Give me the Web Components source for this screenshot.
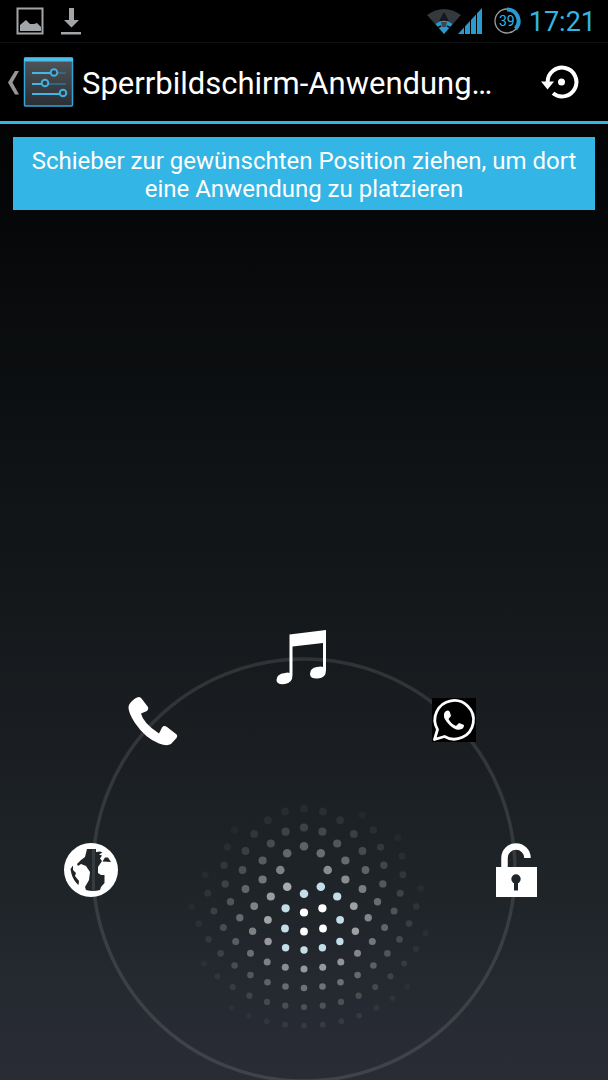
<!DOCTYPE html>
<html lang="de">
<head>
<meta charset="utf-8">
<meta name="viewport" content="width=device-width, initial-scale=1">
<title>Sperrbildschirm-Anwendungen</title>
<style>
  html { height: 100%; }
  body {
    margin: 0;
    min-height: 100%;
    display: flex;
    flex-direction: column;
    background: linear-gradient(#000 0%, #050607 18%, #0e1113 40%, #16191c 58%, #1f2428 82%, #282b34 96%, #292c35 100%);
    color: #fff;
    font-family: Roboto, "Liberation Sans", sans-serif;
  }
  lock-stage { flex: 1; }
</style>
</head>
<body>
  <status-bar battery="39" time="17:21"></status-bar>
  <action-bar>Sperrbildschirm-Anwendung…</action-bar>
  <hint-banner>Schieber zur gewünschten Position ziehen, um dort eine Anwendung zu platzieren</hint-banner>
  <lock-stage>
    <lock-target angle="180" icon="globe" label="Browser"></lock-target>
    <lock-target angle="135" icon="phone" label="Telefon"></lock-target>
    <lock-target angle="90" icon="music" label="Musik"></lock-target>
    <lock-target angle="45" icon="chat" label="WhatsApp"></lock-target>
    <lock-target angle="0" icon="unlock" label="Entsperren"></lock-target>
  </lock-stage>

<script>
// status-bar: notification icons on the left, signal, battery and clock on the right
class StatusBar extends HTMLElement {
  constructor() {
    super();
    this.attachShadow({ mode: "open" });
  }

  connectedCallback() {
    this.shadowRoot.innerHTML = `
      <style>
        :host {
          display: flex;
          align-items: center;
          justify-content: space-between;
          height: 42px;
          padding: 0 12px 0 16px;
          background: #000;
          border-bottom: 1px solid #101112;
          color: #33b5e5;
        }
        .group { display: flex; align-items: center; }
        .left { gap: 16px; }
        svg { display: block; }
        .signal { margin-right: 10px; }
        .battery {
          display: grid;
          place-items: center;
          margin-right: 8px;
          font-size: 14px;
          line-height: 28px;
        }
        .battery > * { grid-area: 1 / 1; }
        .time {
          padding-top: 2px;
          font-size: 27px;
          line-height: 40px;
        }
      </style>
      <div class="group left">
        <svg width="28" height="28" viewBox="0 0 28 28" aria-hidden="true">
          <rect x="1.5" y="1.5" width="25" height="25" fill="none" stroke="#a3a6a8" stroke-width="2"/>
          <path d="M4 24V18L10 13L14 17L18 17L21 16L25 20V24Z" fill="#a3a6a8"/>
        </svg>
        <svg width="22" height="28" viewBox="0 0 22 28" aria-hidden="true">
          <path d="M9 1H14V13H19L11.500 20.500L4 13H9ZM1 25H21V27.500H1Z" fill="#a3a6a8"/>
        </svg>
      </div>
      <div class="group">
        <svg class="signal" width="56" height="28" viewBox="0 0 56 28" aria-hidden="true">
          <path d="M0 8Q17 -4 34 8L17 27Z" fill="#34393d"/>
          <path d="M17 5L22 14H12Z" fill="#16191b"/>
          <path d="M8.500 17Q17 10.500 25.500 17L17 27Z" fill="#2a9bd0"/>
          <path d="M14 15H20L19 20H15Z" fill="#3b4852"/>
          <path d="M11 20.500L14 19M23 20.500L20 19" stroke="#0a1217" stroke-width="1.500"/>
          <path d="M31 27L55 1V27Z" fill="#2a9bd0"/>
          <path d="M37.500 18V28M43.500 12V28M49.500 5V28" stroke="#000" stroke-width="1"/>
        </svg>
        <span class="battery">
          <svg width="28" height="28" viewBox="0 0 28 28" aria-hidden="true">
            <circle cx="14" cy="14" r="12" fill="none" stroke="#9a9da0" stroke-width="1.300"/>
            <path d="M14 2.500A11.500 11.500 0 0 1 22.500 21.800" fill="none" stroke="#2a9bd0" stroke-width="4"/>
          </svg>
          <span>${this.getAttribute("battery")}</span>
        </span>
        <span class="time">${this.getAttribute("time")}</span>
      </div>
    `;
  }
}

// action-bar: up button with the settings icon, the slotted title, reset button
class ActionBar extends HTMLElement {
  constructor() {
    super();
    this.attachShadow({ mode: "open" });
    this.shadowRoot.innerHTML = `
      <style>
        :host {
          display: flex;
          align-items: center;
          height: 78px;
          padding: 0 28px 0 6px;
          background: #000;
          border-bottom: 3px solid #33b5e5;
        }
        button {
          appearance: none;
          border: none;
          background: none;
          padding: 0;
          color: inherit;
          cursor: pointer;
        }
        svg { display: block; }
        h1 {
          flex: 1;
          min-width: 0;
          margin: 0 0 0 8px;
          padding-top: 4px;
          font-size: 31px;
          font-weight: 400;
          line-height: 40px;
          white-space: nowrap;
          overflow: hidden;
          text-overflow: ellipsis;
        }
      </style>
      <button aria-label="Nach oben">
        <svg width="68" height="50" viewBox="0 0 68 50">
          <defs>
            <linearGradient id="face" x1="0" y1="0" x2="0" y2="1">
              <stop offset="0" stop-color="#50555a"/>
              <stop offset="1" stop-color="#2b2f33"/>
            </linearGradient>
          </defs>
          <path d="M9 14H13L6.500 25.500L13 37.500H9L2 25.500Z" fill="#94979a"/>
          <rect x="18.500" y="1" width="48" height="48" rx="1" fill="url(#face)" stroke="#33a5db" stroke-width="1.500"/>
          <rect x="18" y="0.500" width="49" height="4" rx="1" fill="#4dbdec"/>
          <path d="M26 16H60M26 27H60M26 37H58" stroke="#30739a" stroke-width="1.500"/>
          <path d="M26 16H44M26 27H36M26 37H53" stroke="#45b5e6" stroke-width="2"/>
          <g fill="#333b40" stroke="#45afe0" stroke-width="2">
            <circle cx="48" cy="15.500" r="3.300"/>
            <circle cx="39" cy="26" r="3.300"/>
            <circle cx="57" cy="36" r="3.300"/>
          </g>
        </svg>
      </button>
      <h1><slot></slot></h1>
      <button aria-label="Zurücksetzen">
        <svg width="44" height="40" viewBox="0 0 44 40">
          <path d="M11.600 20A14.400 14.400 0 1 1 17 31.300" fill="none" stroke="#fff" stroke-width="4"/>
          <path d="M5 19.500H18L11.500 27.500Z" fill="#fff"/>
          <circle cx="25.500" cy="20" r="3.500" fill="#fff"/>
        </svg>
      </button>
    `;
  }
}

// hint-banner: blue box with the slotted hint
class HintBanner extends HTMLElement {
  constructor() {
    super();
    this.attachShadow({ mode: "open" });
    this.shadowRoot.innerHTML = `
      <style>
        :host {
          display: block;
          margin: 13px 13px 0;
          padding: 10px 14px 7px;
          background: #33b5e5;
          font-size: 24px;
          line-height: 28px;
          text-align: center;
        }
      </style>
      <slot></slot>
    `;
  }
}

// lock-stage: outer ring, dotted glow around the handle, slotted targets
const RINGS = [
  { r: 23.7, count: 8 },
  { r: 42.5, count: 14 },
  { r: 61.5, count: 20 },
  { r: 80, count: 27 },
  { r: 99, count: 33 },
  { r: 118, count: 40 },
  { r: 137, count: 46 },
  { r: 155.7, count: 52 },
];
const GLOW = { x: 7, y: 50, radius: 120 };

class LockStage extends HTMLElement {
  constructor() {
    super();
    this.attachShadow({ mode: "open" });
  }

  _dots() {
    const out = [];
    RINGS.forEach(({ r, count }, ring) => {
      for (let i = 0; i < count; i++) {
        const a = (i / count) * Math.PI * 2;
        const x = Math.sin(a) * r;
        const y = Math.cos(a) * r;
        const d = Math.hypot(x - GLOW.x, y - GLOW.y);
        if (d > GLOW.radius) continue;
        let fill = "#fff";
        let alpha = 1;
        if (d > 39) {
          alpha = 0.03 + 0.6 * Math.pow((GLOW.radius - d) / (GLOW.radius - 39), 1.5);
        } else if (d > 22) {
          fill = "#c3dde9";
        }
        out.push(`<circle cx="${x.toFixed(1)}" cy="${y.toFixed(1)}" r="${(4.3 - ring * 0.2).toFixed(1)}" fill="${fill}" fill-opacity="${alpha.toFixed(2)}"/>`);
      }
    });
    return out.join("");
  }

  connectedCallback() {
    this.shadowRoot.innerHTML = `
      <style>
        :host {
          display: block;
          position: relative;
          min-height: 480px;
          overflow: hidden;
        }
        .hub {
          position: absolute;
          left: 50%;
          bottom: 210px;
          width: 0;
          height: 0;
        }
        svg {
          position: absolute;
          left: -220px;
          top: -220px;
        }
      </style>
      <div class="hub">
        <svg width="440" height="440" viewBox="-220 -220 440 440" aria-hidden="true">
          <circle r="211" fill="none" stroke="#fff" stroke-opacity="0.11" stroke-width="3.500"/>
          ${this._dots()}
        </svg>
        <slot></slot>
      </div>
    `;
  }
}

// lock-target: one app on the ring, placed by its angle
const ICONS = {
  globe: `
    <circle cx="-1" r="27" fill="#fff"/>
    <g transform="translate(-1 0)" fill="#20252a">
      <path d="M-4 -21H5V-18L9 -18.500L11.500 -17.500L8 -15.500L11 -14.500L9 -11.500L11 -9L9 -6L7 -3V3L10 5H13.500V13L10 17L9 20Q2 22 -5 20L-6 17L-2 10L-1 2L-5 -4L-10 -6L-13 -4L-14 -6L-10 -10L-6 -13Z"/>
      <path d="M11.500 -8.500L14 -12.500H17L20 -8Z"/>
      <path d="M-18 -4.500L-20.500 -1L-19.500 4Q-17.500 11 -12.500 15L-12 11L-16 6L-15 3L-18 0Z"/>
      <path fill="#363b3f" d="M1 -21H4V21H1Z"/>
    </g>`,
  phone: `
    <path fill="#fff" transform="translate(-1 0)" d="M-16 -22.500Q-13 -24 -11.500 -21.500L-5 -13Q-4 -10.500 -6 -9L-12 -6.500Q-10 3 6 13.500L9 7.500Q11 5 14 7L23 14Q25 15.500 23.500 18L18 24Q14 26.500 6 23.500Q-8 18 -18 3Q-27 -11 -23.500 -16Q-20 -21 -16 -22.500Z"/>`,
  music: `
    <path fill="#fff" d="M-14.500 -23.500L22 -28V12Q22 20 14 20.500Q6 21 6 16Q6 10 13 9Q17 8 19 9V-15L-11.500 -11.500V17Q-11.500 25 -19 26Q-27.500 27 -27.500 22Q-27.500 16 -19 15Q-16 14 -14.500 15V-23.500Z"/>`,
  chat: `
    <rect x="-22" y="-22" width="44" height="44" fill="#000"/>
    <path fill="none" stroke="#fff" stroke-width="2.800" stroke-linejoin="round" d="M-19.500 19.500L-16.500 9.500A19.300 19.300 0 1 1 -9.500 16.500Z"/>
    <path fill="#fff" d="M-8 -9Q-5 -10.500 -4 -7.500L-3 -4L-5.500 -1Q-3 4 2 6L5 3L10 5Q10 9 6 9.500Q1 10.500 -4 5.500Q-11 -1 -10 -6Q-9.500 -8 -8 -9Z"/>`,
  unlock: `
    <path fill="none" stroke="#fff" stroke-width="6.500" d="M-11.500 0V-12A11.500 11.500 0 0 1 11.500 -12"/>
    <rect x="-20" y="-3" width="41" height="30" fill="#fff"/>
    <circle cy="9" r="4.700" fill="#20252a"/>
    <path d="M-2 10H2V20.500H-2Z" fill="#20252a"/>`,
};
const ORBIT = 212;

class LockTarget extends HTMLElement {
  constructor() {
    super();
    this.attachShadow({ mode: "open" });
  }

  connectedCallback() {
    const a = (Number(this.getAttribute("angle")) * Math.PI) / 180;
    const x = Math.round(Math.cos(a) * ORBIT);
    const y = Math.round(-Math.sin(a) * ORBIT);
    this.shadowRoot.innerHTML = `
      <style>
        :host {
          display: block;
          position: absolute;
          left: ${x - 30}px;
          top: ${y - 30}px;
        }
        button {
          appearance: none;
          display: block;
          border: none;
          background: none;
          padding: 0;
          cursor: pointer;
        }
        svg { display: block; }
      </style>
      <button aria-label="${this.getAttribute("label")}">
        <svg width="60" height="60" viewBox="-30 -30 60 60">${ICONS[this.getAttribute("icon")]}</svg>
      </button>
    `;
  }
}

customElements.define("status-bar", StatusBar);
customElements.define("action-bar", ActionBar);
customElements.define("hint-banner", HintBanner);
customElements.define("lock-stage", LockStage);
customElements.define("lock-target", LockTarget);
</script>
</body>
</html>
